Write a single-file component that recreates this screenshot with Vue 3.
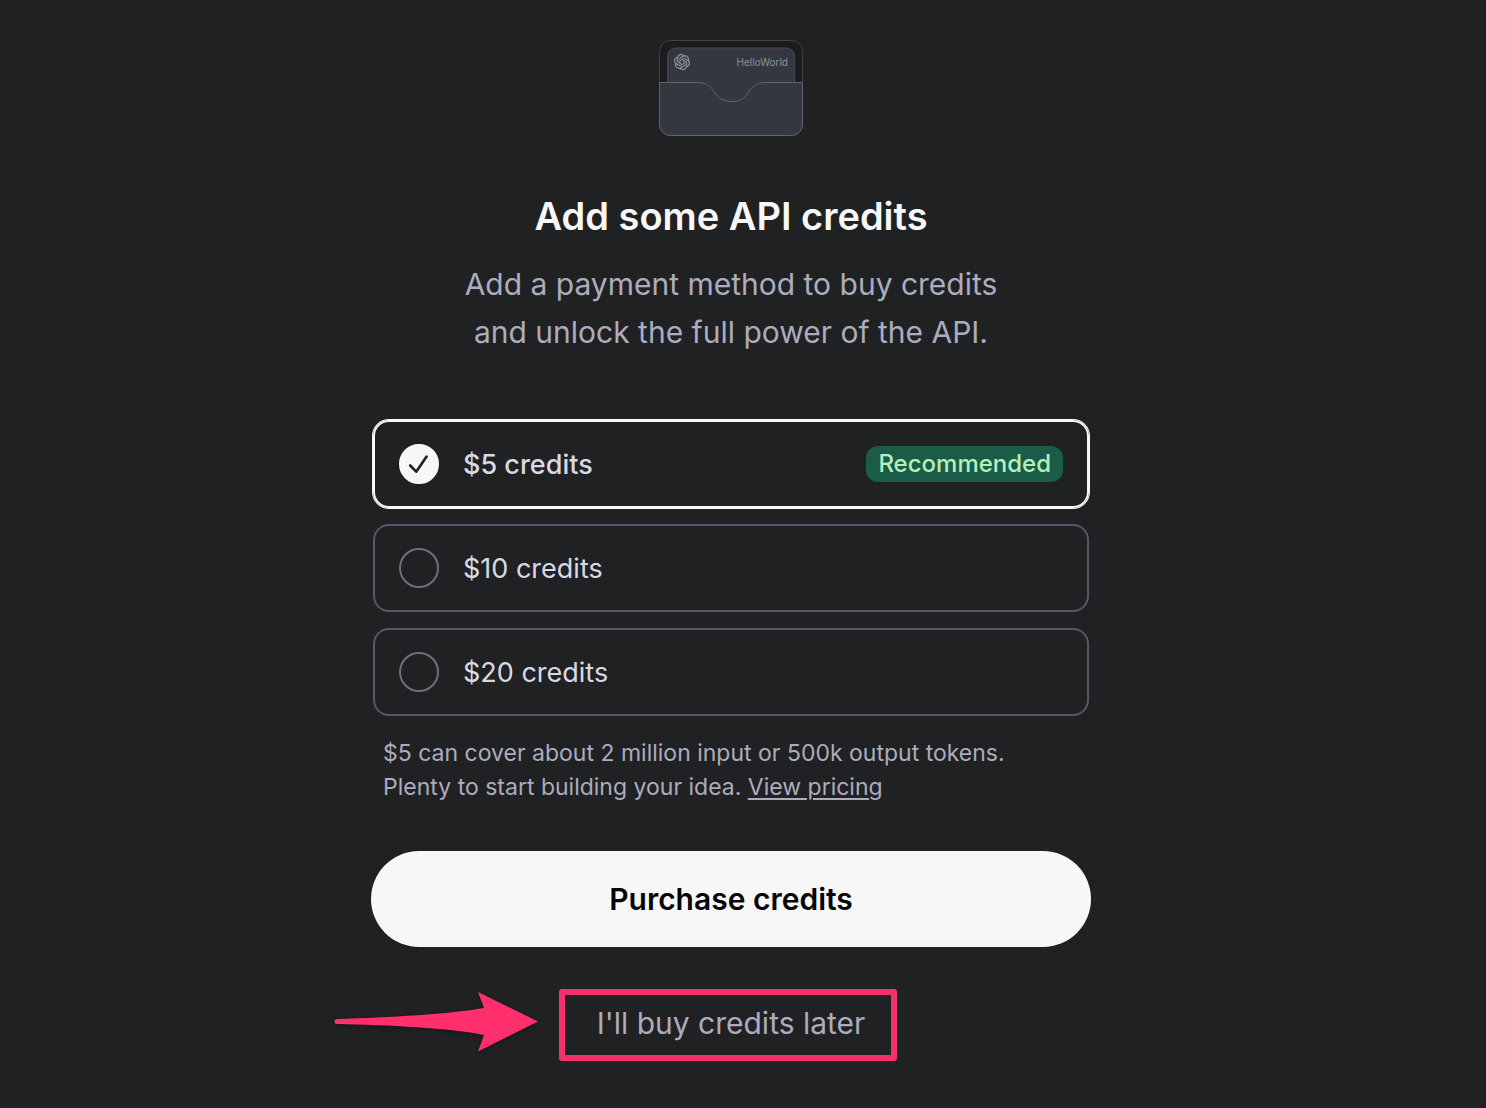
<script setup>
import { ref } from 'vue'

const selected = ref(5)
const options = [
  { amount: 5, recommended: true },
  { amount: 10, recommended: false },
  { amount: 20, recommended: false },
]
</script>

<template>
  <main class="page">
    <section class="panel">
      <svg class="wallet" width="146" height="98" viewBox="0 0 146 98" role="img" aria-label="API wallet">
        <rect x="1.5" y="1.5" width="143" height="95" rx="11" fill="#1c1c1e" stroke="#414146" />
        <path d="M9.500 70V17a8 8 0 0 1 8-8h111a8 8 0 0 1 8 8v53z" fill="#353740" stroke="#46474f" />
        <svg x="16" y="15" width="16" height="16" viewBox="0 0 24 24">
          <path fill="#9596a1" stroke="#9596a1" stroke-width="0.3" d="M22.2819 9.8211a5.9847 5.9847 0 0 0-.5157-4.9108 6.0462 6.0462 0 0 0-6.5098-2.9A6.0651 6.0651 0 0 0 4.9807 4.1818a5.9847 5.9847 0 0 0-3.9977 2.9 6.0462 6.0462 0 0 0 .7427 7.0966 5.98 5.98 0 0 0 .511 4.9107 6.051 6.051 0 0 0 6.5146 2.9001A5.9847 5.9847 0 0 0 13.2599 24a6.0557 6.0557 0 0 0 5.7718-4.2058 5.9894 5.9894 0 0 0 3.9977-2.9001 6.0557 6.0557 0 0 0-.7475-7.0729zm-9.022 12.6081a4.4755 4.4755 0 0 1-2.8764-1.0408l.1419-.0804 4.7783-2.7582a.7948.7948 0 0 0 .3927-.6813v-6.7369l2.02 1.1686a.071.071 0 0 1 .038.052v5.5826a4.504 4.504 0 0 1-4.4945 4.4944zm-9.6607-4.1254a4.4708 4.4708 0 0 1-.5346-3.0137l.142.0852 4.783 2.7582a.7712.7712 0 0 0 .7806 0l5.8428-3.3685v2.3324a.0804.0804 0 0 1-.0332.0615L9.74 19.9502a4.4992 4.4992 0 0 1-6.1408-1.6464zM2.3408 7.8956a4.485 4.485 0 0 1 2.3655-1.9728V11.6a.7664.7664 0 0 0 .3879.6765l5.8144 3.3543-2.0201 1.1685a.0757.0757 0 0 1-.071 0l-4.8303-2.7865A4.504 4.504 0 0 1 2.3408 7.872zm16.5963 3.8558L13.1038 8.364 15.1192 7.2a.0757.0757 0 0 1 .071 0l4.8303 2.7913a4.4944 4.4944 0 0 1-.6765 8.1042v-5.6772a.79.79 0 0 0-.407-.667zm2.0107-3.0231l-.142-.0852-4.7735-2.7818a.7759.7759 0 0 0-.7854 0L9.409 9.2297V6.8974a.0662.0662 0 0 1 .0284-.0615l4.8303-2.7866a4.4992 4.4992 0 0 1 6.6802 4.66zM8.3065 12.863l-2.02-1.1638a.0804.0804 0 0 1-.038-.0567V6.0742a4.4992 4.4992 0 0 1 7.3757-3.4537l-.142.0805L8.704 5.459a.7948.7948 0 0 0-.3927.6813zm1.0976-2.3654l2.602-1.4998 2.6069 1.4998v2.9994l-2.5974 1.4997-2.6067-1.4997Z" />
        </svg>
        <text class="wallet-name" x="130" y="27" text-anchor="end">HelloWorld</text>
        <path d="M1.500 43.500H40C49 43.500 53 48 57 54C61 60 66 62.500 74 62.500S86 60 90 54C94 48 98 43.500 107 43.500H144.500V85.500a11 11 0 0 1-11 11H12.500a11 11 0 0 1-11-11z" fill="#353740" stroke="#62636e" />
      </svg>

      <h1>Add some API credits</h1>
      <p class="lead">Add a payment method to buy credits<br />and unlock the full power of the API.</p>

      <form class="form" @submit.prevent>
        <div class="options" role="radiogroup" aria-label="Credit amount">
          <label
            v-for="option in options"
            :key="option.amount"
            class="option"
            :class="{ selected: selected === option.amount }"
          >
            <span class="mark">
              <input v-model="selected" type="radio" name="credits" :value="option.amount" />
              <svg v-if="selected === option.amount" width="40" height="40" viewBox="0 0 40 40" aria-hidden="true">
                <path d="M11.200 21.500L17.200 27.700L27.600 12.500" fill="none" stroke="#202123" stroke-width="2.600" stroke-linecap="round" stroke-linejoin="round" />
              </svg>
            </span>
            <span class="amount">${{ option.amount }} credits</span>
            <span v-if="option.recommended" class="badge">Recommended</span>
          </label>
        </div>

        <p class="note">
          $5 can cover about 2 million input or 500k output tokens.<br />Plenty to start building your idea.
          <a href="#pricing">View pricing</a>
        </p>

        <button class="purchase" type="submit">Purchase credits</button>
      </form>

      <div class="skip">
        <button class="later" type="button">I'll buy credits later</button>
        <span class="highlight"></span>
        <svg class="arrow" width="206" height="62" viewBox="0 0 206 62" aria-hidden="true">
          <path d="M4 28C55 26.500 118 23 151 17L145 1L205 30.500L145 60.500L151 44C118 37 55 34 4 33A2.500 2.500 0 0 1 4 28z" fill="#ff2f6d" />
        </svg>
      </div>
    </section>
  </main>
</template>

<style>
body {
  margin: 0;
  background: #202123;
}
</style>

<style scoped>
.page {
  box-sizing: border-box;
  min-height: 100vh;
  padding: 39px 24px 40px 0;
  background: #202123;
  color: #acacbe;
  font-family: Inter, "Liberation Sans", sans-serif;
}

.panel {
  display: flex;
  flex-direction: column;
  align-items: center;
  max-width: 720px;
  margin: 0 auto;
}

.wallet {
  display: block;
}

.wallet-name {
  fill: #8e8ea0;
  font-size: 10px;
}

h1 {
  margin: 55px 0 0;
  color: #f7f7f8;
  font-size: 38px;
  font-weight: 600;
  line-height: 48px;
}

.lead {
  margin: 20px 0 0;
  font-size: 30px;
  line-height: 48px;
  text-align: center;
}

.form {
  display: flex;
  flex-direction: column;
  width: 100%;
  margin-top: 64px;
}

.options {
  display: flex;
  flex-direction: column;
  gap: 16px;
  margin: 0 2px;
}

.option {
  display: flex;
  align-items: center;
  box-sizing: border-box;
  height: 88px;
  padding: 0 24px;
  border: 2px solid #565869;
  border-radius: 16px;
  color: #d9d9e3;
  font-size: 27px;
}

.option.selected {
  border-color: #f7f7f8;
  box-shadow: 0 0 0 1px #f7f7f8;
  font-weight: 500;
}

.mark {
  display: grid;
  margin-right: 24px;
}

.mark > * {
  grid-area: 1 / 1;
}

.mark svg {
  pointer-events: none;
}

.mark input {
  appearance: none;
  box-sizing: border-box;
  width: 40px;
  height: 40px;
  margin: 0;
  border: 2px solid #6e6e80;
  border-radius: 50%;
}

.mark input:checked {
  border-color: #f7f7f8;
  background: #f7f7f8;
}

.badge {
  margin-left: auto;
  padding: 0 12px;
  border-radius: 12px;
  background: #1a5c47;
  color: #b4f0bb;
  font-size: 24px;
  font-weight: 500;
  line-height: 36px;
}

.note {
  margin: 20px 0 0 12px;
  font-size: 23px;
  line-height: 34px;
}

.note a {
  color: inherit;
  text-decoration: underline;
  text-decoration-thickness: 2px;
  text-underline-offset: 3px;
}

.purchase {
  height: 96px;
  margin-top: 47px;
  border: 0;
  border-radius: 48px;
  background: #f7f7f8;
  color: #050509;
  font: 600 30px/48px Inter, "Liberation Sans", sans-serif;
}

.skip {
  position: relative;
  margin-top: 42px;
}

.later {
  display: block;
  height: 72px;
  padding: 0 36px 4px;
  border: 0;
  background: none;
  color: #acacbe;
  font: 400 30px/48px Inter, "Liberation Sans", sans-serif;
}

.highlight {
  position: absolute;
  inset: 0 4px 0 -2px;
  border: 6px solid #f5316b;
  border-radius: 3px;
  pointer-events: none;
}

.arrow {
  position: absolute;
  top: 2px;
  right: 100%;
  margin-right: 22px;
  filter: drop-shadow(0 1px 2px #00000066);
}
</style>
